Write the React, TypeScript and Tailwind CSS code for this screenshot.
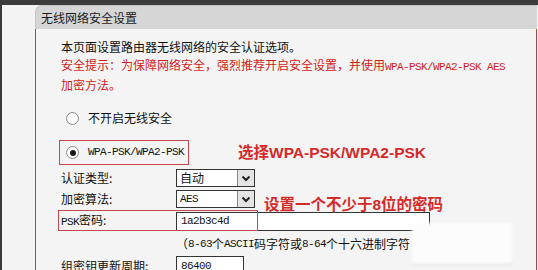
import React from 'react';

const cjk = { fontFamily: '"Noto Sans CJK SC", "Noto Sans", sans-serif' };
const mono = { fontFamily: '"Liberation Mono", "DejaVu Sans Mono", monospace' };
const bold = { fontFamily: '"Liberation Sans", "Noto Sans CJK SC", sans-serif' };

const Mono = ({ children }: { children: React.ReactNode }) => (
  <span className="text-[11px] tracking-[-0.6px]" style={mono}>
    {children}
  </span>
);

const Radio = ({ checked }: { checked?: boolean }) => (
  <span className="flex h-[13px] w-[13px] items-center justify-center rounded-full border border-[#8a8a8a] bg-white">
    {checked && <span className="h-[6px] w-[6px] rounded-full bg-[#1a1a1a]" />}
  </span>
);

const Arrow = () => (
  <div className="flex w-[17px] items-center justify-center border-l border-[#888] bg-[#e4e4e4]">
    <svg width="10" height="7" viewBox="0 0 10 7">
      <path d="M1.5 1.5 L5 5 L8.5 1.5" fill="none" stroke="#222" strokeWidth="2" />
    </svg>
  </div>
);

export default function App() {
  return (
    <div className="relative flex h-[270px] w-[538px] flex-col overflow-hidden bg-[#f2f2f2] text-[12px] text-[#111]" style={cjk}>
      <div className="h-[5px] shrink-0 bg-[#3b3b3b]" />
      <div className="flex flex-1">
        <div className="w-[35px] shrink-0 border-l-[2px] border-[#3a3a3a] bg-[#f3f3f3]" />
        <div className="flex w-[502px] flex-col">
          <div className="flex h-[24px] shrink-0 items-center rounded-tl-[7px] border-l border-t border-[#c4c4c4] bg-[#d6d6d6] pl-[5px] text-[12px] text-[#1a1a1a]">
            无线网络安全设置
          </div>
          <div className="flex-1 border-x border-[#9b4b4b] bg-[#f4f4f4] pl-[25px] pt-[9px]">
            <div className="leading-[18px]">
              <div>本页面设置路由器无线网络的安全认证选项。</div>
              <div className="text-[#d01c1c]">
                安全提示：为保障网络安全，强烈推荐开启安全设置，并使用<Mono>WPA-PSK/WPA2-PSK AES</Mono>
              </div>
              <div className="text-[#d01c1c]">加密方法。</div>
            </div>

            <div className="mt-[14px] flex h-[20px] items-center gap-[9px] pl-[5px]">
              <Radio />
              <span>不开启无线安全</span>
            </div>

            <div className="mt-[12px] flex items-center">
              <div className="ml-[-2px] flex h-[25px] w-[130px] items-center gap-[9px] border border-[#c2474f] pl-[6px]">
                <Radio checked />
                <Mono>WPA-PSK/WPA2-PSK</Mono>
              </div>
              <span className="ml-[49px] text-[15.5px] font-bold text-[#d42a2a]" style={bold}>
                选择WPA-PSK/WPA2-PSK
              </span>
            </div>

            <div className="mt-[4px] flex h-[18px] items-center">
              <span className="w-[115px]">认证类型:</span>
              <div className="flex h-[18px] w-[79px] items-stretch border border-[#333] bg-white">
                <div className="flex flex-1 items-center pl-[3px] leading-none">自动</div>
                <Arrow />
              </div>
            </div>

            <div className="mt-[3px] flex h-[18px] items-center">
              <span className="w-[115px]">加密算法:</span>
              <div className="flex h-[18px] w-[79px] items-stretch border border-[#333] bg-white">
                <div className="flex flex-1 items-center pl-[3px] leading-none">
                  <Mono>AES</Mono>
                </div>
                <Arrow />
              </div>
              <span className="ml-[9px] translate-y-[6px] text-[15.5px] font-bold text-[#d42a2a]" style={bold}>
                设置一个不少于8位的密码
              </span>
            </div>

            <div className="relative mt-[3px] flex h-[20px] items-center">
              <span className="w-[115px]">
                <Mono>PSK</Mono>密码:
              </span>
              <div className="flex h-[19px] w-[254px] items-center border border-[#333] bg-white pl-[4px]">
                <Mono>1a2b3c4d</Mono>
              </div>
              <div className="absolute left-[-3px] top-[-1px] h-[21px] w-[200px] border border-[#c2474f]" />
            </div>

            <div className="mt-[4px] flex h-[18px] items-center pl-[115px]">
              （<Mono>8-63</Mono>个<Mono>ASCII</Mono>码字符或<Mono>8-64</Mono>个十六进制字符
            </div>

            <div className="mt-[3px] flex h-[20px] items-center">
              <span className="w-[115px]">组密钥更新周期:</span>
              <div className="flex h-[20px] w-[68px] items-center border border-[#333] bg-white pl-[4px]">
                <Mono>86400</Mono>
              </div>
            </div>
          </div>
        </div>
      </div>
      <div className="absolute left-[412px] top-[223px] h-[41px] w-[100px] rounded-[3px] bg-[#fcfcfc] shadow-[0_1px_0_#d4d4d4] blur-[1.5px]" />
    </div>
  );
}
